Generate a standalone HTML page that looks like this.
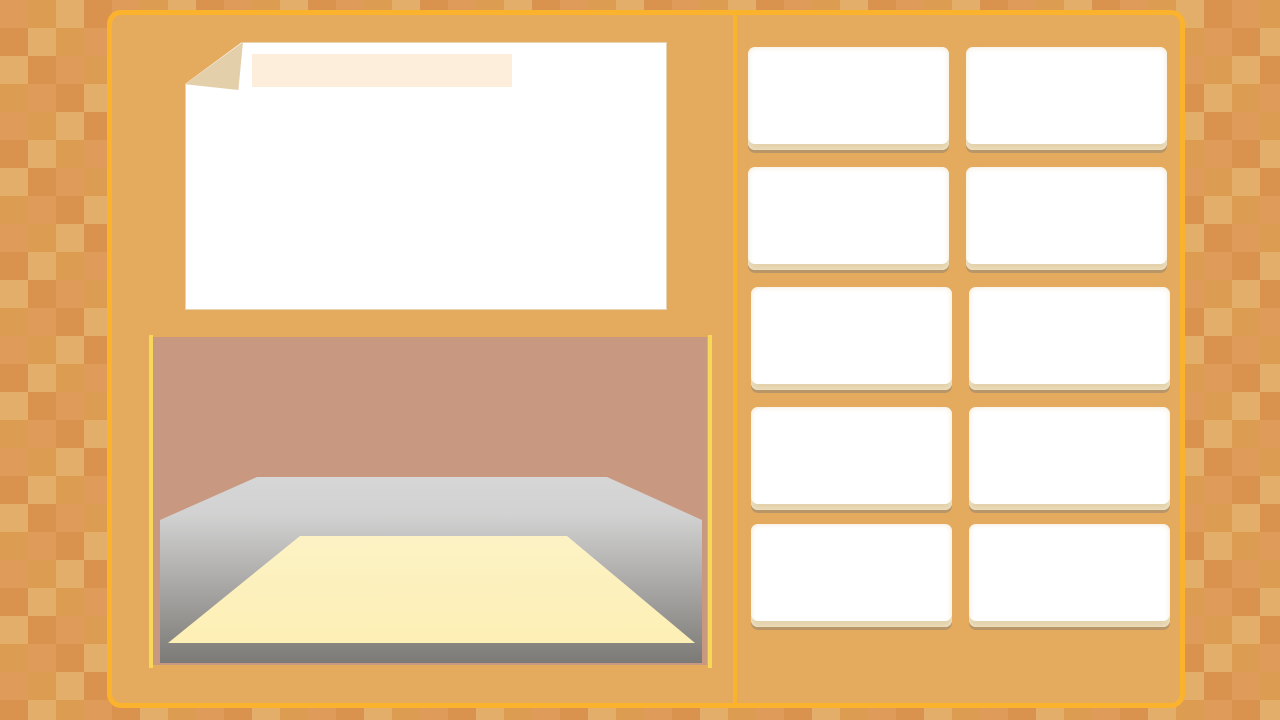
<!DOCTYPE html>
<html><head><meta charset="utf-8"><style>
body{margin:0;width:1280px;height:720px;overflow:hidden;position:relative;background:#e0a560;font-family:"Liberation Sans",sans-serif}
.bg{position:absolute;inset:0;background:
conic-gradient(#dc9c52 25%,#e3ae6a 0 50%,#dc9c52 0 75%,#e3ae6a 0) 0 0/56px 56px;}
.bg2{position:absolute;inset:0;background:conic-gradient(#d98b4b 25%,transparent 0 50%,#d98b4b 0 75%,transparent 0) 28px 0/112px 112px;opacity:.55}
.panel{position:absolute;left:107px;top:10px;width:1068px;height:688px;background:#e4ab5f;border:5px solid #fbb22c;border-radius:14px}
.div{position:absolute;left:733px;top:12px;width:4px;height:694px;background:#fbb22c}
.paper{position:absolute;left:185px;top:42px;width:480px;height:266px;background:#fff;border:1px solid #e6d3b4;clip-path:polygon(57px 0,100% 0,100% 100%,0 100%,0 42px)}
.fold{position:absolute;left:185px;top:42px;width:58px;height:48px;background:#e4cfab;clip-path:polygon(100% 0,92% 100%,0 88%)}
.banner{position:absolute;left:252px;top:54px;width:260px;height:33px;background:#fdeedb}
.yl{position:absolute;top:335px;width:4px;height:333px;background:#f6d75a}
.stage{position:absolute;left:153px;top:337px;width:554px;height:328px;background:#c99880}
.btn{position:absolute;width:201px;height:103px;background:#fff;border-radius:7px;box-shadow:inset 0 0 6px #f1e6cc,inset 0 -6px 0 #e4d2ab,0 3px 0 #b99668}
</style></head><body>
<div class="bg"></div><div class="bg2"></div>
<div class="panel"></div><div class="div"></div>
<div class="paper"></div><div class="fold"></div><div class="banner"></div>
<div class="stage"></div>
<div class="yl" style="left:149px"></div><div class="yl" style="left:708px"></div>
<svg style="position:absolute;left:0;top:0" width="1280" height="720">
<defs><linearGradient id="g" x1="0" y1="0" x2="0" y2="1"><stop offset="0" stop-color="#d6d6d6"/><stop offset=".2" stop-color="#d2d2d2"/><stop offset="1" stop-color="#7c7a76"/></linearGradient>
<linearGradient id="y" x1="0" y1="0" x2="0" y2="1"><stop offset="0" stop-color="#fcf2c4"/><stop offset="1" stop-color="#fdefb5"/></linearGradient></defs>
<polygon points="160,520 257,477 607,477 702,520 702,663 160,663" fill="url(#g)"/>
<polygon points="300,536 567,536 695,643 168,643" fill="url(#y)"/>
</svg>
<div class="btn" style="left:748px;top:47px"></div><div class="btn" style="left:966px;top:47px"></div>
<div class="btn" style="left:748px;top:167px"></div><div class="btn" style="left:966px;top:167px"></div>
<div class="btn" style="left:751px;top:287px"></div><div class="btn" style="left:969px;top:287px"></div>
<div class="btn" style="left:751px;top:407px"></div><div class="btn" style="left:969px;top:407px"></div>
<div class="btn" style="left:751px;top:524px"></div><div class="btn" style="left:969px;top:524px"></div>
</body></html>
